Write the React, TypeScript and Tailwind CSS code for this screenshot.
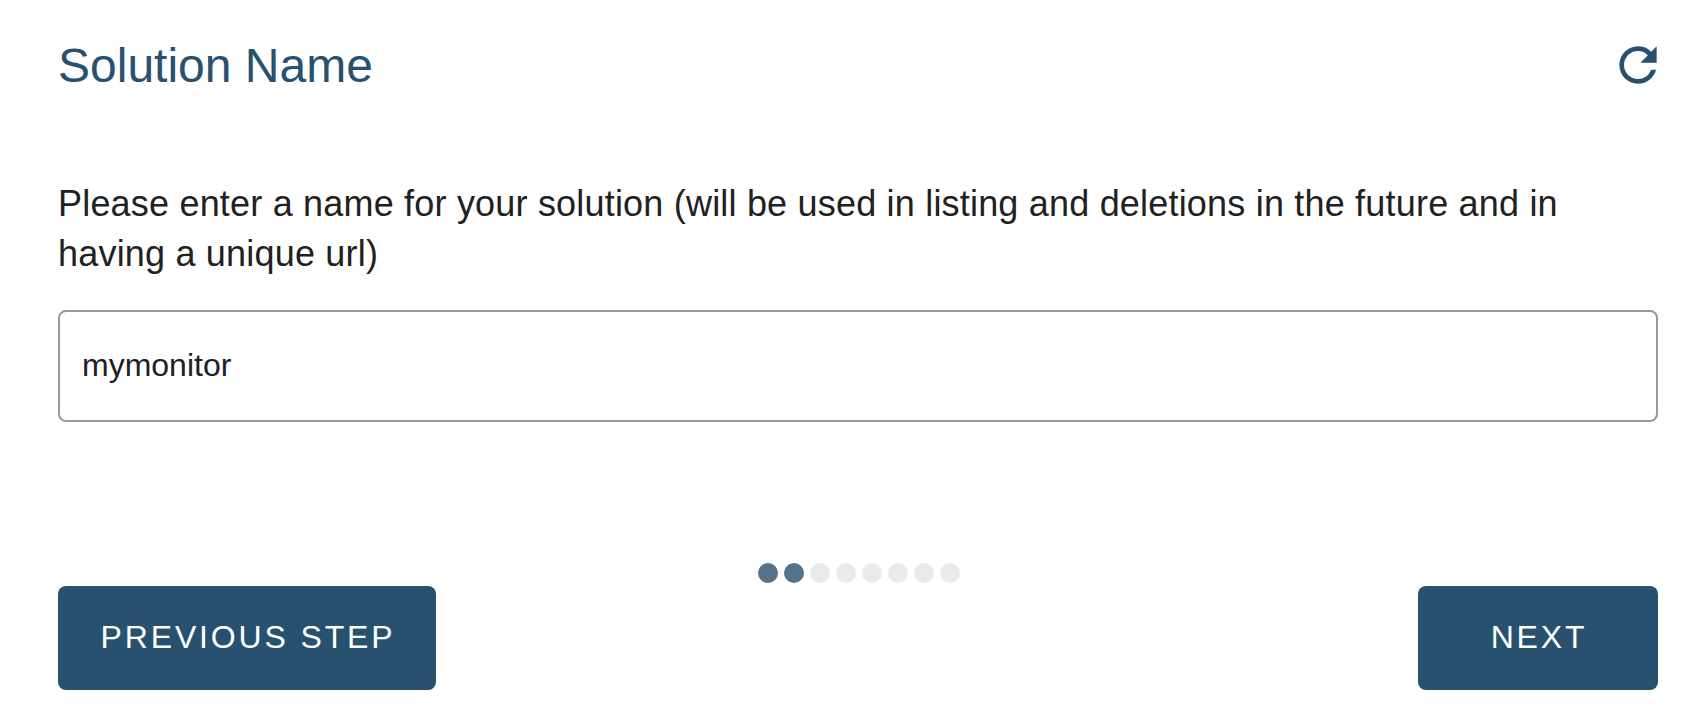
import React from "react";

const dots = [true, true, false, false, false, false, false, false];

export default function App() {
  return (
    <main className="flex h-[728px] w-[1700px] flex-col bg-white pr-[42px] pl-[58px] font-['Liberation_Sans',Arial,sans-serif] text-[#212121]">
      <header className="mt-[35px] flex h-[60px] items-center justify-between text-[#28506f]">
        <h1 className="pt-[2px] text-[48px] leading-[60px]">Solution Name</h1>
        <button aria-label="Restart" className="-mr-[8px]">
          <svg className="size-[56px]" viewBox="0 0 24 24" fill="currentColor">
            <path d="M17.65 6.35A7.958 7.958 0 0 0 12 4c-4.42 0-7.99 3.58-7.99 8s3.57 8 7.99 8c3.73 0 6.84-2.55 7.73-6h-2.08A5.99 5.99 0 0 1 12 18c-3.31 0-6-2.69-6-6s2.69-6 6-6c1.66 0 3.14.69 4.22 1.78L13 11h7V4l-2.35 2.35z" />
          </svg>
        </button>
      </header>
      <label htmlFor="name" className="mt-[84px] text-[36px] leading-[50px] tracking-[0.195px]">
        Please enter a name for your solution (will be used in listing and deletions in the future and in<br />having a unique url)
      </label>
      <input id="name" defaultValue="mymonitor" className="mt-[31px] h-[112px] w-[1600px] rounded-[8px] border-2 border-[#999] px-[22px] pb-[2px] text-[32px] outline-none" />
      <div className="mt-[141px] flex justify-center gap-[6px] pl-[2px]">
        {dots.map((done, i) => (
          <span key={i} className={done ? "size-[20px] rounded-full bg-[#53738c]" : "size-[20px] rounded-full bg-[#e9eaec]"} />
        ))}
      </div>
      <footer className="mt-[3px] flex justify-between text-[32px] tracking-[2.85px] text-white">
        <button className="h-[104px] w-[378px] rounded-[8px] bg-[#28506f] pb-[3px] pl-[2px]">PREVIOUS STEP</button>
        <button className="h-[104px] w-[240px] rounded-[8px] bg-[#28506f] pb-[3px] pl-[2px]">NEXT</button>
      </footer>
    </main>
  );
}
